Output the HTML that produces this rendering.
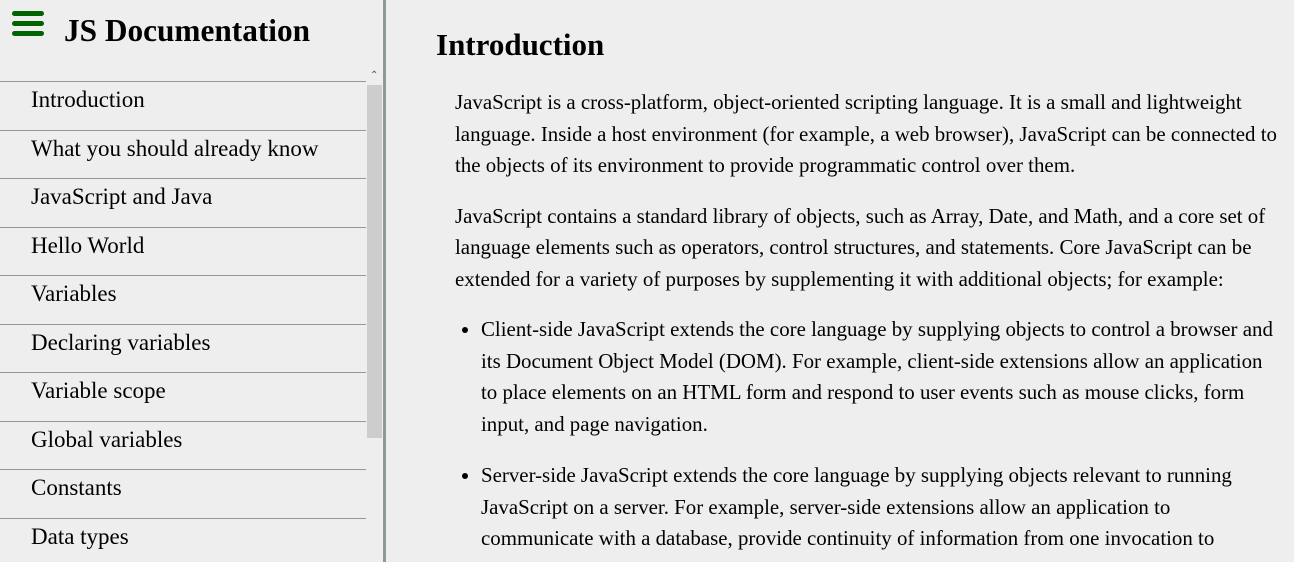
<!DOCTYPE html>
<html style="overflow:hidden"><head><style>
*{margin:0;padding:0;box-sizing:border-box}
html,body{width:1294px;height:562px;overflow:hidden}
body{background:#eeeeee;font-family:"Liberation Serif",serif;color:#000;position:relative}
#side{position:absolute;left:0;top:0;width:386px;height:562px;border-right:3px solid #8f9a98}
.ham{position:absolute;left:12px;top:11px;width:32px}
.ham div{height:5px;background:#006400;border-radius:3px;margin-bottom:5px}
.title{position:absolute;left:64px;top:13px;font-size:31.3px;font-weight:bold;white-space:nowrap}
.nav{position:absolute;left:0;top:81px;width:366px}
.nav div{height:48.5px;border-top:1.5px solid #8f9a98;font-size:23px;padding-left:31px;line-height:36px;white-space:nowrap}
.thumb{position:absolute;left:367px;top:85px;width:15px;height:353px;background:#cdcdcd}
.arr{position:absolute;left:370px;top:70px;font-size:10px;color:#555}
#main{position:absolute;left:436px;top:0;width:858px;height:562px;overflow:hidden}
h1{position:absolute;left:0;top:27px;font-size:31px;white-space:nowrap}
.c{position:absolute;left:19px;width:823px;font-size:20.9px;line-height:31.5px}
ul{list-style:disc;padding-left:26px}
li{margin-bottom:19px}
</style></head><body>
<div id="side">
<div class="ham"><div></div><div></div><div></div></div>
<div class="title">JS Documentation</div>
<div class="nav">
<div>Introduction</div><div>What you should already know</div><div>JavaScript and Java</div><div>Hello World</div><div>Variables</div><div>Declaring variables</div><div>Variable scope</div><div>Global variables</div><div>Constants</div><div>Data types</div>
</div>
<div class="thumb"></div><div class="arr">&#8963;</div>
</div>
<div id="main">
<h1>Introduction</h1>
<div class="c" style="top:87px">
<p>JavaScript is a cross-platform, object-oriented scripting language. It is a small and lightweight language. Inside a host environment (for example, a web browser), JavaScript can be connected to the objects of its environment to provide programmatic control over them.</p>
<p style="margin-top:19px">JavaScript contains a standard library of objects, such as Array, Date, and Math, and a core set of language elements such as operators, control structures, and statements. Core JavaScript can be extended for a variety of purposes by supplementing it with additional objects; for example:</p>
<ul style="margin-top:19px">
<li>Client-side JavaScript extends the core language by supplying objects to control a browser and its Document Object Model (DOM). For example, client-side extensions allow an application to place elements on an HTML form and respond to user events such as mouse clicks, form input, and page navigation.</li>
<li style="margin-top:20px">Server-side JavaScript extends the core language by supplying objects relevant to running JavaScript on a server. For example, server-side extensions allow an application to communicate with a database, provide continuity of information from one invocation to another of the application, or perform file manipulations on a server.</li>
</ul>
</div>
</div>
</body></html>
